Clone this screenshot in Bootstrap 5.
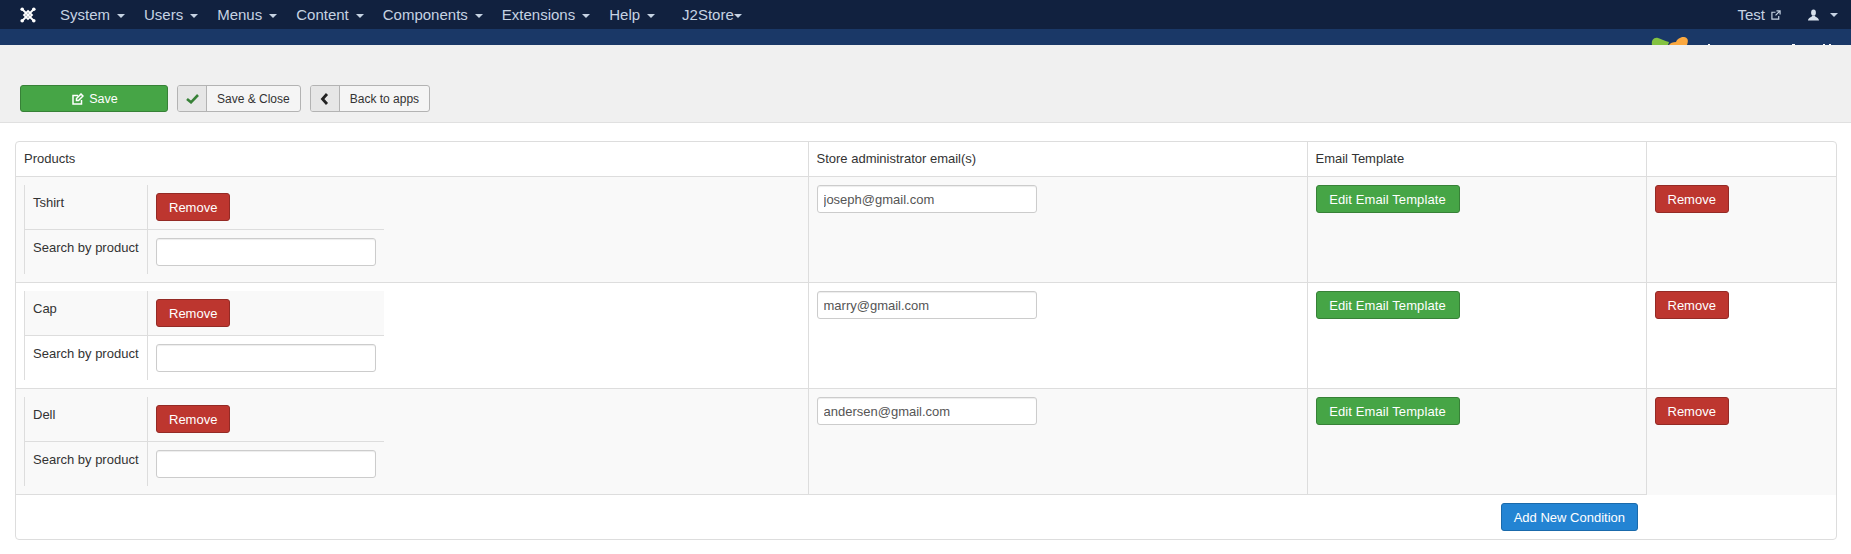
<!DOCTYPE html>
<html lang="en">
<head>
<meta charset="UTF-8">
<title>J2Store - Email apps</title>
<link href="https://cdn.jsdelivr.net/npm/bootstrap@5.3.0/dist/css/bootstrap.min.css" rel="stylesheet">
<style>
body { font-family: "Liberation Sans", Arial, sans-serif; font-size: 13px; color: #333; background: #fff; line-height: 18px; }
.top-bar { height: 29px; background: #11213f; padding-left: 20px; padding-right: 13px; }
.top-bar .nav-item-x { color: #c6d3e3; font-size: 15px; text-decoration: none; line-height: 20px; white-space: nowrap; }
.caret-x { display: inline-block; width: 0; height: 0; border-left: 4px solid transparent; border-right: 4px solid transparent; border-top: 4px solid #c6d3e3; vertical-align: middle; margin-left: 7px; }
.band { height: 16px; background: #1a3867; overflow: hidden; padding-right: 11px; }
.tool-strip { height: 78px; background: #f0f0f0; border-bottom: 1px solid #e0e0e0; padding: 40px 0 0 20px; }
.btn-save { width: 148px; height: 27px; padding: 1px 0 0 2px; background: #46a546; border: 1px solid #378137; color: #fff; font-size: 12.5px; border-radius: 3px; }
.btn-tool { height: 27px; padding: 0; background: #f5f5f5; border: 1px solid #b3b3b3; color: #333; font-size: 12px; border-radius: 3px; overflow: hidden; }
.btn-tool .ico { width: 29px; height: 100%; background: #e6e6e6; border-right: 1px solid #b3b3b3; }
.btn-tool .txt { padding: 0 10px; }
.sheet { margin: 18px 14px 0 15px; border: 1px solid #ddd; border-radius: 4px; overflow: hidden; }
.grid-x { width: 100%; border-collapse: collapse; table-layout: fixed; }
.grid-x > tbody > tr > th, .grid-x > tbody > tr > td { padding: 8px; vertical-align: top; border-left: 1px solid #ddd; border-top: 1px solid #ddd; font-weight: 400; }
.grid-x > tbody > tr > :first-child { border-left: 0; }
.grid-x > tbody > tr:first-child > th { border-top: 0; height: 34px; }
.grid-x > tbody > tr.stripe > td { background: #f9f9f9; }
.grid-x > tbody > tr.foot-x > td { padding: 8px 8px 8px; text-align: right; }
.grid-x > tbody > tr.foot-x > td.blank-x { border: 0; }
.inner-x { width: 360px; border-collapse: collapse; }
.inner-x td { padding: 8px; vertical-align: top; border-left: 1px solid #ddd; border-top: 1px solid #ddd; }
.inner-x tr:first-child td { border-top: 0; }
.inner-x tr.stripe td { background: #f9f9f9; }
.inner-x td:first-child { width: 123px; padding-top: 9px; }
.field-x { display: block; height: 28px; padding: 4px 6px; font-size: 13px; line-height: 18px; color: #555; background: #fff; border: 1px solid #ccc; border-radius: 3px; box-shadow: inset 0 1px 1px rgba(0,0,0,.075); }
.btn-rm, .btn-tpl, .btn-add { height: 28px; padding: 1px 12px 0; font-size: 13px; color: #fff; border-radius: 3px; line-height: 26px; }
.btn-rm { background: #bd362f; border: 1px solid #942a25; }
.btn-tpl { width: 144px; background: #46a546; border: 1px solid #378137; letter-spacing: .1px; }
.btn-add { background: #2384d3; border: 1px solid #1a6aab; }
</style>
</head>
<body>
<div class="top-bar d-flex align-items-center">
    <svg width="16" height="16" viewBox="0 0 16 16" class="flex-shrink-0" fill="none" stroke="#fff" stroke-width="1.800">
        <path d="M2.500 2.500 13.500 13.500M13.500 2.500 2.500 13.500M8 4 12 8 8 12 4 8Z"/>
        <g fill="#fff" stroke="none"><circle cx="2.200" cy="2.200" r="1.800"/><circle cx="13.800" cy="2.200" r="1.800"/><circle cx="2.200" cy="13.800" r="1.800"/><circle cx="13.800" cy="13.800" r="1.800"/></g>
    </svg>
    <div class="d-flex align-items-center" style="gap:19px;margin-left:24px">
        <a class="nav-item-x" href="#">System<span class="caret-x"></span></a>
        <a class="nav-item-x" href="#">Users<span class="caret-x"></span></a>
        <a class="nav-item-x" href="#">Menus<span class="caret-x"></span></a>
        <a class="nav-item-x" href="#">Content<span class="caret-x"></span></a>
        <a class="nav-item-x" href="#">Components<span class="caret-x"></span></a>
        <a class="nav-item-x" href="#">Extensions<span class="caret-x"></span></a>
        <a class="nav-item-x" href="#">Help<span class="caret-x"></span></a>
        <a class="nav-item-x ms-2" href="#">J2Store<span class="caret-x ms-0"></span></a>
    </div>
    <div class="ms-auto d-flex align-items-center" style="gap:27px">
        <a class="nav-item-x d-flex align-items-center" href="#">Test
            <svg style="margin-left:6px" width="10" height="10" viewBox="0 0 11 11" fill="none" stroke="#c6d3e3" stroke-width="1.300"><path d="M8.500 6.500V10H1V2.500H5M6 1H10V5M10 1 5 6"/></svg>
        </a>
        <span class="d-flex align-items-center">
            <svg width="11" height="12" viewBox="0 0 12 12" fill="#d6e0ec"><ellipse cx="6" cy="3.500" rx="2.600" ry="3.400"/><path d="M0 12C0 9 3.500 8.500 4.500 7H7.500C8.500 8.500 12 9 12 12Z"/></svg>
            <span class="caret-x" style="margin-left:11px"></span>
        </span>
    </div>
</div>
<div class="band d-flex justify-content-end">
    <svg width="200" height="16" viewBox="0 0 200 16">
        <path d="M29 16C30 14 33 13 36 13 37 10 41 7.500 44 8 47.500 8.500 49 11 47 16Z" fill="#fba83f"/>
        <path d="M12 16C11 11 14 8 18 9 22 10 24 12 29 13L28 16Z" fill="#84c341"/>
        <g fill="#fff"><rect x="68" y="15" width="2" height="1"/><rect x="152" y="15" width="3" height="1"/><rect x="183" y="15" width="2" height="1"/><rect x="189" y="15" width="2" height="1"/></g>
    </svg>
</div>
<div class="tool-strip d-flex align-items-start" style="gap:9px">
    <button class="btn btn-save d-flex align-items-center justify-content-center" type="button">
        <svg style="margin-right:5px" width="12" height="12" viewBox="0 0 12 12" fill="none" stroke="#fff" stroke-width="1.500"><path d="M9.500 7V11H1V2.500H6M4.500 5.500V7.500H6.500L11 3 9 1Z"/></svg>
        Save
    </button>
    <button class="btn btn-tool d-flex align-items-center" type="button">
        <span class="ico d-flex align-items-center justify-content-center">
            <svg width="13" height="11" viewBox="0 0 13 11" fill="none" stroke="#378137" stroke-width="2.600"><path d="M1 6 5 9.300 12 2"/></svg>
        </span>
        <span class="txt">Save &amp; Close</span>
    </button>
    <button class="btn btn-tool d-flex align-items-center" type="button">
        <span class="ico d-flex align-items-center justify-content-center">
            <svg width="9" height="12" viewBox="0 0 9 12" fill="none" stroke="#222" stroke-width="2.800"><path d="M7 1 2.500 6 7 11"/></svg>
        </span>
        <span class="txt">Back to apps</span>
    </button>
</div>
<div class="sheet">
<table class="grid-x">
    <colgroup><col style="width:792px"><col style="width:499px"><col style="width:339px"><col></colgroup>
    <tbody>
    <tr><th>Products</th><th>Store administrator email(s)</th><th>Email Template</th><th></th></tr>
    <tr class="stripe">
        <td>
            <table class="inner-x">
                <tr><td>Tshirt</td><td><button class="btn btn-rm" type="button">Remove</button></td></tr>
                <tr><td>Search by product</td><td><input class="field-x w-100" type="text"></td></tr>
            </table>
        </td>
        <td><input class="field-x" style="width:220px" type="text" value="joseph@gmail.com"></td>
        <td><button class="btn btn-tpl" type="button">Edit Email Template</button></td>
        <td><button class="btn btn-rm" type="button">Remove</button></td>
    </tr>
    <tr>
        <td>
            <table class="inner-x">
                <tr class="stripe"><td>Cap</td><td><button class="btn btn-rm" type="button">Remove</button></td></tr>
                <tr><td>Search by product</td><td><input class="field-x w-100" type="text"></td></tr>
            </table>
        </td>
        <td><input class="field-x" style="width:220px" type="text" value="marry@gmail.com"></td>
        <td><button class="btn btn-tpl" type="button">Edit Email Template</button></td>
        <td><button class="btn btn-rm" type="button">Remove</button></td>
    </tr>
    <tr class="stripe">
        <td>
            <table class="inner-x">
                <tr><td>Dell</td><td><button class="btn btn-rm" type="button">Remove</button></td></tr>
                <tr><td>Search by product</td><td><input class="field-x w-100" type="text"></td></tr>
            </table>
        </td>
        <td><input class="field-x" style="width:220px" type="text" value="andersen@gmail.com"></td>
        <td><button class="btn btn-tpl" type="button">Edit Email Template</button></td>
        <td><button class="btn btn-rm" type="button">Remove</button></td>
    </tr>
    <tr class="foot-x"><td colspan="3"><button class="btn btn-add" type="button">Add New Condition</button></td><td class="blank-x"></td></tr>
    </tbody>
</table>
</div>
<script src="https://cdn.jsdelivr.net/npm/bootstrap@5.3.0/dist/js/bootstrap.bundle.min.js"></script>
</body>
</html>
